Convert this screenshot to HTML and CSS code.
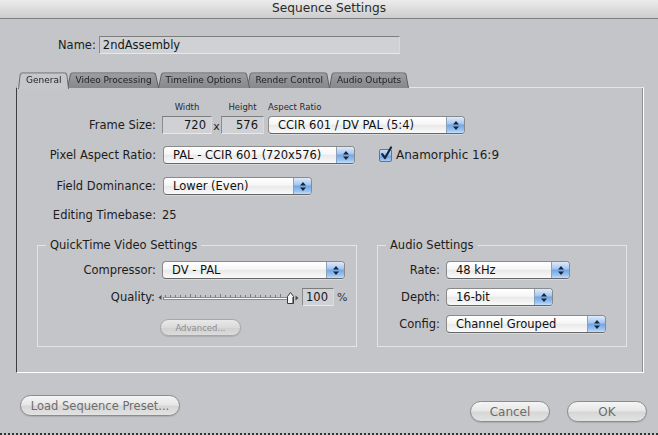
FILE: index.html
```html
<!DOCTYPE html>
<html>
<head>
<meta charset="utf-8">
<title>Sequence Settings</title>
<link rel="stylesheet" href="styles.css">
</head>
<body>
<div class="window">
  <div class="titlebar">Sequence Settings</div>

  <div class="name-row">
    <span class="name-label">Name:</span>
    <div class="field name-field">2ndAssembly</div>
  </div>

  <div class="tabs">
    <div class="tab active"><span>General</span></div>
    <div class="tab"><span>Video Processing</span></div>
    <div class="tab"><span>Timeline Options</span></div>
    <div class="tab"><span>Render Control</span></div>
    <div class="tab"><span>Audio Outputs</span></div>
  </div>

  <div class="panel">
    <div class="row frame-row">
      <div class="label">Frame Size:</div>
      <div class="col center">
        <div class="caption">Width</div>
        <div class="field num w-width">720</div>
      </div>
      <div class="times">x</div>
      <div class="col center">
        <div class="caption">Height</div>
        <div class="field num w-height">576</div>
      </div>
      <div class="col start">
        <div class="caption">Aspect Ratio</div>
        <div class="popup w-ccir">
          <span class="pop-text">CCIR 601 / DV PAL (5:4)</span>
          <span class="pop-arrows"><svg width="6" height="9" viewBox="0 0 6 9"><path d="M3 0L6 3.4H0Z M3 9L6 5.6H0Z" fill="#17263a"/></svg></span>
        </div>
      </div>
    </div>

    <div class="row row-pixel">
      <div class="label">Pixel Aspect Ratio:</div>
      <div class="popup w-pixel">
        <span class="pop-text">PAL - CCIR 601 (720x576)</span>
        <span class="pop-arrows"><svg width="6" height="9" viewBox="0 0 6 9"><path d="M3 0L6 3.4H0Z M3 9L6 5.6H0Z" fill="#17263a"/></svg></span>
      </div>
      <div class="check">
        <span class="checkbox"><svg width="14" height="15" viewBox="0 0 14 15"><path d="M3.2 8.2 L6 12 L12 1.5" stroke="#15243a" stroke-width="2.2" fill="none" stroke-linecap="round" stroke-linejoin="round"/></svg></span>
        <span class="check-label">Anamorphic 16:9</span>
      </div>
    </div>

    <div class="row row-field">
      <div class="label">Field Dominance:</div>
      <div class="popup w-field">
        <span class="pop-text">Lower (Even)</span>
        <span class="pop-arrows"><svg width="6" height="9" viewBox="0 0 6 9"><path d="M3 0L6 3.4H0Z M3 9L6 5.6H0Z" fill="#17263a"/></svg></span>
      </div>
    </div>

    <div class="row row-timebase">
      <div class="label">Editing Timebase:</div>
      <div class="value">25</div>
    </div>

    <div class="groups">
      <fieldset class="group qt">
        <legend>QuickTime Video Settings</legend>
        <div class="row">
          <div class="label">Compressor:</div>
          <div class="popup w-comp">
            <span class="pop-text">DV - PAL</span>
            <span class="pop-arrows"><svg width="6" height="9" viewBox="0 0 6 9"><path d="M3 0L6 3.4H0Z M3 9L6 5.6H0Z" fill="#17263a"/></svg></span>
          </div>
        </div>
        <div class="row row-quality">
          <div class="label q">Quality:</div>
          <svg class="slider" width="141" height="16" viewBox="0 0 141 16">
            <path d="M0.5 8.5 L3.5 6 L3.5 11Z" fill="#4a4a4a"/>
            <g stroke="#7a7a7a" stroke-width="1">
              <path d="M7.5 6V8 M12.5 6V8 M17.5 6V8 M22.5 6V8 M27.5 6V8 M32.5 5V8 M37.5 6V8 M42.5 6V8 M47.5 6V8 M52.5 6V8 M57.5 6V8 M62.5 5V8 M67.5 6V8 M72.5 6V8 M77.5 6V8 M82.5 6V8 M87.5 6V8 M92.5 5V8 M97.5 6V8 M102.5 6V8 M107.5 6V8 M112.5 6V8 M117.5 6V8 M122.5 5V8"/>
            </g>
            <rect x="5.5" y="8.5" width="125" height="2" fill="#fbfbfb" stroke="#8a8a8a" stroke-width="1"/>
            <path d="M129.5 14.5 V7.5 L132.5 3.5 L135.5 7.5 V14.5Z" fill="#f4f4f4" stroke="#3a3a3a" stroke-width="1"/>
            <path d="M134.5 8 V14" stroke="#8a8a8a" stroke-width="1"/>
            <path d="M140.5 9 L137.5 6.5 L137.5 11.5Z" fill="#4a4a4a"/>
          </svg>
          <div class="field num w-quality">100</div>
          <span class="percent">%</span>
        </div>
        <div class="row row-adv">
          <div class="pill small">Advanced...</div>
        </div>
      </fieldset>

      <fieldset class="group audio">
        <legend>Audio Settings</legend>
        <div class="row">
          <div class="label">Rate:</div>
          <div class="popup w-rate">
            <span class="pop-text">48 kHz</span>
            <span class="pop-arrows"><svg width="6" height="9" viewBox="0 0 6 9"><path d="M3 0L6 3.4H0Z M3 9L6 5.6H0Z" fill="#17263a"/></svg></span>
          </div>
        </div>
        <div class="row row-gap">
          <div class="label">Depth:</div>
          <div class="popup w-depth">
            <span class="pop-text">16-bit</span>
            <span class="pop-arrows"><svg width="6" height="9" viewBox="0 0 6 9"><path d="M3 0L6 3.4H0Z M3 9L6 5.6H0Z" fill="#17263a"/></svg></span>
          </div>
        </div>
        <div class="row row-gap">
          <div class="label">Config:</div>
          <div class="popup w-config">
            <span class="pop-text">Channel Grouped</span>
            <span class="pop-arrows"><svg width="6" height="9" viewBox="0 0 6 9"><path d="M3 0L6 3.4H0Z M3 9L6 5.6H0Z" fill="#17263a"/></svg></span>
          </div>
        </div>
      </fieldset>
    </div>
  </div>

  <div class="footer">
    <div class="pill load">Load Sequence Preset...</div>
    <div class="spacer"></div>
    <div class="pill action">Cancel</div>
    <div class="pill action">OK</div>
  </div>
</div>
</body>
</html>
```
FILE: styles.css
```css
* { box-sizing: border-box; }

html, body {
  margin: 0;
  padding: 0;
}

body {
  width: 658px;
  height: 435px;
  overflow: hidden;
  background: #c4c5c9;
  font-family: "DejaVu Sans", "Noto Sans", sans-serif;
  font-size: 11.5px;
  color: #1c1c1c;
}

.window {
  width: 658px;
  height: 435px;
  display: flex;
  flex-direction: column;
  border-bottom: 2px dotted #2f3532;
}

/* Title bar */
.titlebar {
  height: 19px;
  flex: none;
  border-bottom: 1px solid #7f7f7f;
  background: linear-gradient(#ececec, #d9d9d9 60%, #cdcdcd);
  text-align: center;
  font-size: 12.2px;
  line-height: 17px;
  color: #2a2a2a;
}

/* Name */
.name-row {
  display: flex;
  align-items: center;
  margin-top: 17px;
  padding-left: 58px;
  gap: 3px;
}

.field {
  background: #d0d1d4;
  border: 1px solid;
  border-color: #7d7d7d #d9d9db #e8e8e9 #8b8b8b;
  height: 18px;
  line-height: 16px;
  color: #151515;
}

.name-field {
  width: 301px;
  padding-left: 3px;
}

/* Tabs */
.tabs {
  display: flex;
  margin-top: 17px;
  padding-left: 18px;
  height: 17px;
  position: relative;
  z-index: 2;
  margin-bottom: -1px;
}

.tab {
  position: relative;
  padding: 0 8px;
  margin-right: -2px;
  font-size: 9px;
  line-height: 18px;
  color: #222;
}

.tab span {
  position: relative;
}

.tab::before {
  content: "";
  position: absolute;
  left: 0;
  right: 0;
  top: 0;
  bottom: 0;
  background: linear-gradient(#9d9ea1, #86878a);
  border: 1px solid #5c5d60;
  border-bottom: none;
  border-radius: 3px 3px 0 0;
  transform: perspective(30px) rotateX(8deg);
  transform-origin: bottom;
}

.tab:nth-child(2) { z-index: 4; }
.tab:nth-child(3) { z-index: 3; }
.tab:nth-child(4) { z-index: 2; }
.tab:nth-child(5) { z-index: 1; }

.tab.active { z-index: 6; }

.tab.active::before {
  background: #c6c7cb;
  border-color: #6a6a6a;
  bottom: -1px;
}

/* Panel */
.panel {
  flex: none;
  margin-left: 16px;
  width: 628px;
  height: 286px;
  border: 1px solid;
  border-color: #e4e5e7 #ffffff #ffffff #3e3e3e;
  box-shadow: inset -1px 0 0 #8d8e91;
  padding-top: 13px;
  position: relative;
  z-index: 1;
}

.row {
  display: flex;
  align-items: center;
}

.label {
  flex: none;
  width: 139px;
  margin-right: 6px;
  text-align: right;
  line-height: 18px;
  white-space: nowrap;
}

.value {
  line-height: 18px;
}

.frame-row {
  align-items: flex-end;
}

.col {
  display: flex;
  flex-direction: column;
  gap: 3px;
}

.col.center { align-items: center; }
.col.start { align-items: flex-start; margin-left: 4px; }

.caption {
  font-size: 8.5px;
  line-height: 12px;
  color: #2a2a2a;
  white-space: nowrap;
}

.num {
  height: 18px;
  line-height: 16px;
  text-align: right;
  padding-right: 5px;
}

.w-width { width: 50px; }
.w-height { width: 43px; }
.w-quality { width: 32px; margin-left: 3px; }

.times {
  width: 9px;
  text-align: center;
  line-height: 14px;
  font-size: 11px;
}

/* Popups */
.popup {
  display: flex;
  height: 18px;
  border: 1px solid #8a8a8a;
  border-bottom-color: #666;
  border-radius: 4px;
  background: linear-gradient(#ffffff, #f6f6f6 45%, #e9e9e9 52%, #fafafa);
  box-shadow: 0 1px 0 rgba(255,255,255,0.35);
  overflow: hidden;
}

.pop-text {
  flex: 1;
  padding-left: 9px;
  line-height: 16px;
  white-space: nowrap;
  color: #111;
}

.pop-arrows {
  flex: none;
  width: 18px;
  display: flex;
  align-items: center;
  justify-content: center;
  border-left: 1px solid #8aa0bb;
  background: linear-gradient(#dfeafa, #a9c9f0 40%, #76a6e4 52%, #9cc6f4 85%, #c7e0fb);
}

.w-ccir { width: 197px; }
.w-pixel { width: 192px; margin-left: 1px; }
.w-field { width: 149px; margin-left: 1px; }
.w-comp { width: 183px; }
.w-rate { width: 124px; }
.w-depth { width: 107px; }
.w-config { width: 160px; }

.row-pixel { margin-top: 12px; }
.row-field { margin-top: 13px; }
.row-timebase { margin-top: 11px; }

/* Checkbox */
.check {
  display: flex;
  align-items: center;
  margin-left: 24px;
}

.checkbox {
  position: relative;
  width: 13px;
  height: 13px;
  border: 1px solid #56789f;
  border-radius: 2px;
  background: linear-gradient(#cfe0f6, #8fb9ec 50%, #6ea1e2 55%, #a9cdf5);
  margin-right: 4px;
}

.checkbox svg {
  position: absolute;
  left: -1px;
  top: -4px;
}

.check-label {
  font-size: 12px;
  line-height: 18px;
}

/* Groups */
.groups {
  display: flex;
  gap: 20px;
  padding-left: 20px;
  margin-top: 14px;
}

.group {
  margin: 0;
  padding: 9px 0 10px 0;
  border: 1px solid #e3e4e6;
  min-width: 0;
}

.group legend {
  margin-left: 8px;
  padding: 0 4px;
  line-height: 14px;
  font-size: 11.5px;
}

.qt { width: 320px; }
.audio { width: 250px; padding-bottom: 13px; }

.qt .label { width: 118px; }
.qt .label.q { width: 117px; margin-right: 3px; }
.audio .label { width: 62px; }

.row-quality { margin-top: 9px; }
.row-adv { margin-top: 13px; padding-left: 122px; }
.row-gap { margin-top: 9px; }

.slider { flex: none; display: block; }

.percent {
  margin-left: 3px;
  font-size: 11px;
  color: #333;
}

/* Buttons */
.pill {
  display: flex;
  align-items: center;
  justify-content: center;
  height: 21px;
  border: 1px solid #8c8c8c;
  border-radius: 10.5px;
  background: linear-gradient(#f5f5f5, #e6e6e6 48%, #d6d6d6 52%, #e2e2e2);
  box-shadow: 0 1px 1px rgba(0,0,0,0.12);
  color: #6d6d6d;
  white-space: nowrap;
}

.pill.small {
  width: 81px;
  height: 17px;
  font-size: 8.5px;
  color: #8e8e8e;
  border-color: #a7a7a9;
  background: linear-gradient(#e9e9ea, #dadadb 50%, #d0d0d1 52%, #dcdcdd);
}

.footer {
  display: flex;
  align-items: flex-start;
  padding: 22px 11px 0 20px;
}

.load { width: 160px; }

.spacer { flex: 1; }

.action {
  width: 80px;
  margin-top: 6px;
  font-size: 12px;
}

.action + .action { margin-left: 17px; }
```
